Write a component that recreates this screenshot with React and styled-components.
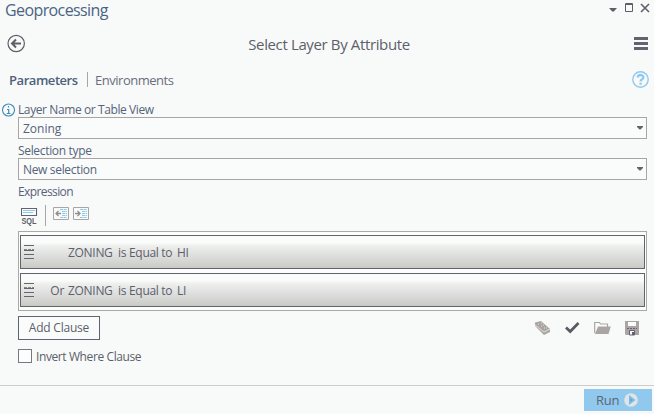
import React from 'react';
import styled, { createGlobalStyle } from 'styled-components';

const ink = '#5c5f6a';
const sky = '#8fc9ef';

const Global = createGlobalStyle`
  * { box-sizing: border-box; }
  body { margin: 0; background: #f8faf9; }
`;
const Pane = styled.main`
  width: 654px; height: 414px; overflow: hidden;
  display: flex; flex-direction: column;
  background: #f8faf9; color: ${ink};
  font: 12px/16px "Open Sans", "Noto Sans", sans-serif;
  white-space: nowrap;
  svg { display: block; flex: none; }
`;
const Text = styled.span`
  letter-spacing: ${p => p.$track || 0}px;
  padding-top: ${p => p.$drop || 0}px;
`;
const TitleBar = styled.header`
  height: 22px; padding: 0 4px 2px 5px;
  display: flex; justify-content: space-between; align-items: center;
`;
const Title = styled(Text)`font-size: 16px; line-height: 20px; color: #4a6484;`;
const WindowControls = styled.div`display: flex; height: 18px;`;
const Heading = styled.div`
  height: 43px; padding: 0 6px 0 7px;
  display: grid; grid-template-columns: 19px 1fr 14px; align-items: center; text-align: center;
`;
const ToolName = styled(Text)`font-size: 15px; line-height: 20px; padding-right: 2px;`;
const TabBar = styled.nav`
  height: 29px; padding: 0 5px 0 9px;
  display: flex; align-items: center; font-size: 13px; line-height: 18px;
`;
const Tab = styled(Text)`
  width: ${p => p.$width}px; font-weight: ${p => (p.$active ? 600 : 400)};
  color: ${p => (p.$active ? '#4d617b' : '#686e7c')};
`;
const Divider = styled.span`
  width: 1px; height: ${p => p.$height}px; margin: 0 ${p => p.$right}px 0 ${p => p.$left}px;
  background: #aaa5a3;
`;
const HelpSlot = styled.div`margin: 0 0 1px auto;`;
const Form = styled.section`
  padding: 8px 7px 0 18px; height: 283px;
  display: flex; flex-direction: column; align-items: stretch;
  color: #55637a;
`;
const Label = styled.label`
  height: ${p => p.$height || 19}px; padding-top: ${p => p.$top || 0}px;
  display: flex; gap: 3px; margin-left: ${p => (p.$info ? -16 : 0)}px;
`;
const InfoLabel = styled(Label)`
  align-items: flex-end; line-height: 15px;
`;
const Select = styled.div`
  height: 22px; padding: 0 3px 0 4px; border: 1px solid #aaa5a3; background: #fafcfc;
  display: flex; align-items: center; justify-content: space-between;
`;
const Toolbar = styled.div`
  height: 30px; padding: 4px 0 0 3px; display: flex; align-items: flex-start;
`;
const IconButton = styled.span`margin-top: ${p => p.$top || 0}px; margin-right: ${p => p.$right || 0}px;`;
const ClauseList = styled.div`
  height: 80px; padding: 3px 1px; border: 1px solid #aaa9a2; background: #fcfefd;
  display: flex; flex-direction: column; gap: 4px;
`;
const Clause = styled.div`
  height: 34px; padding-left: 3px; border: 1px solid #62636f; color: ${ink};
  background: linear-gradient(#fafbfb 0 20%, #eeefec 32%, #e0e1e1 55%, #d6d6d4 78%, #c9c9c4);
  display: grid; grid-template-columns: 10px 30px 1fr; align-items: center;
`;
const Joiner = styled(Text)`text-align: right;`;
const Condition = styled(Text)`padding-left: 4px; display: flex;`;
const Part = styled.span`width: ${p => p.$width}px;`;
const Actions = styled.div`
  height: 33px; padding: 5px 8px 4px 0;
  display: flex; align-items: center; justify-content: space-between;
`;
const AddButton = styled.button`
  width: 82px; height: 24px; padding: 0; border: 1px solid #62636f; background: #fafcfc;
  color: ${ink}; font: inherit;
`;
const FileActions = styled.div`display: flex; align-items: center; gap: 14px;`;
const CheckRow = styled.label`display: flex; align-items: center; gap: 4px; height: 16px; margin-top: 4px; color: ${ink};`;
const Box = styled.span`width: 14px; height: 14px; border: 1px solid #77787f; background: #fcfefd;`;
const Footer = styled.footer`
  margin-top: 8px; height: 29px; border-top: 1px solid #cdcdc9; padding: 3px 2px 0 0;
  display: flex; justify-content: flex-end;
`;
const RunButton = styled.button`
  width: 68px; height: 22px; padding: 0 14px 0 12px; border: 0; background: #91c9ee; color: #5b6573;
  font: inherit; font-size: 13px; display: flex; align-items: center; justify-content: space-between;
`;

const Caret = () => <svg width="6" height="4" viewBox="0 0 6 4"><path d="M0 0h6v1L3.5 3.5h-1L0 1z" fill="#62646f" /></svg>;

const WindowIcons = () => (
  <svg width="44" height="16" viewBox="0 0 44 16" fill="none">
    <path d="M3 7h8L7.8 10.5H6.2z" fill={ink} />
    <path d="M19.5 2.5h7v8h-7zM19 3.5h8" stroke={ink} />
    <path d="M35 3l8 8M43 3l-8 8" stroke={ink} strokeWidth="1.6" />
  </svg>
);
const BackIcon = () => (
  <svg width="19" height="19" viewBox="0 0 19 19" fill="none" stroke="#5e5e68">
    <circle cx="9.2" cy="9.5" r="8.2" strokeWidth="1.2" />
    <path d="M14 9.5H5.5M9 5.5l-4 4 4 4" strokeWidth="2" />
  </svg>
);
const MenuIcon = () => (
  <svg width="14" height="13" viewBox="0 0 14 13"><path d="M0 0h14v3H0zM0 5h14v3H0zM0 10h14v3H0z" fill="#62636f" /></svg>
);
const HelpIcon = () => (
  <svg width="17" height="17" viewBox="0 0 17 17" fill="none" stroke={sky}>
    <circle cx="8.5" cy="8.5" r="7.7" strokeWidth="1.4" />
    <path d="M5.8 6.4c0-3.2 5.6-3.2 5.6 0 0 2-2.8 1.8-2.8 4M8.6 11.7v2" strokeWidth="2.3" />
  </svg>
);
const InfoIcon = () => (
  <svg width="13" height="14" viewBox="0 0 13 14" fill="none" stroke="#438ab8">
    <circle cx="6.5" cy="7" r="6" strokeWidth="1.1" />
    <path d="M6.5 3v1.6M5 6.5h1.7v4M4.7 10.5h3.8" strokeWidth="1.2" />
  </svg>
);
const SqlIcon = () => (
  <svg width="17" height="23" viewBox="0 0 17 23">
    <path d="M.5 1.5h15v7H.5z" fill="#fafcfc" stroke="#62636f" strokeWidth="1.1" />
    <path d="M2 3.5h12M2 5.5h10" stroke={sky} />
    <text x=".5" y="16.5" textLength="15" lengthAdjust="spacingAndGlyphs" fill={ink} fontFamily="Liberation Sans, sans-serif" fontWeight="700" fontSize="8.5">SQL</text>
  </svg>
);
const IndentIcon = ({ right }) => (
  <svg width="16" height="13" viewBox="0 0 16 13" fill="none">
    <path d="M.5.5h15v12H.5z" stroke="#aaa5a3" />
    <path d="M7 2.5h7M9 4.5h5M9 6.5h5M9 8.5h5M7 10.5h7" stroke={sky} strokeDasharray="3 .6" />
    <path d={right ? 'M2 6.5h5M4.5 4 7 6.5 4.5 9' : 'M8 6.5H3M5.5 4 3 6.5 5.5 9'} stroke="#918d8c" strokeWidth="1.3" />
  </svg>
);
const GripIcon = () => (
  <svg width="10" height="14" viewBox="0 0 10 14" fill="none" stroke="#65656b">
    <path d="M0 .5h10M0 5.5h10M0 9.5h10M0 13.5h10" strokeWidth="1.2" />
    <path d="M0 4.5h3M4 4.5h3M8 4.5h2" stroke="#85858a" />
  </svg>
);
const EraserIcon = () => (
  <svg width="17" height="16" viewBox="0 0 17 16">
    <path d="M1 2.5 7 1l9 8v3l-6 3-9-9z" fill="#aaa5a3" />
    <path d="M1 5l9 7 6-3" stroke="#e1dfdc" fill="none" />
    <path d="M4 4h1M7 3h1M7 6h1M9 5h1M10 8h1M12 8h1" stroke="#e1dfdc" />
  </svg>
);
const CheckIcon = () => (
  <svg width="15" height="16" viewBox="0 0 15 16"><path d="M1 7.5l4.2 4L13.5 3" stroke="#595963" strokeWidth="2.7" fill="none" /></svg>
);
const FolderIcon = () => (
  <svg width="17" height="16" viewBox="0 0 17 16">
    <path d="M.7 13V2.5h4.8l1 1.5h7V7" stroke="#aaa5a3" strokeWidth="1.2" fill="#fafcfc" />
    <path d="M1 14 4 6.5h12.8L14.5 14z" fill="#aaa5a3" />
  </svg>
);
const SaveIcon = () => (
  <svg width="14" height="16" viewBox="0 0 14 16">
    <path d="M0 1h14v14H1l-1-1z" fill="#aaa5a3" />
    <path d="M3 2h8v4H3z" fill="#fafcfc" />
    <path d="M2 8.5h10" stroke="#62636f" strokeDasharray="2 1" />
    <path d="M4.5 10.5h5V15h-5z" fill="#fafcfc" stroke="#62636f" />
    <path d="M7 12h2v3H7z" fill="#62636f" />
  </svg>
);
const PlayIcon = () => (
  <svg width="14" height="14" viewBox="0 0 14 14">
    <circle cx="7" cy="7" r="6.8" fill="#dfe5e7" />
    <path d="M5 2 11.5 7 5 12z" fill="#79bce8" /><path d="M6.5 6.5h1v1h-1z" fill={ink} />
  </svg>
);

const clauses = [
  { joiner: '', value: 'HI' },
  { joiner: 'Or', value: 'LI' },
];

export default function App() {
  return (
    <Pane>
      <Global />
      <TitleBar>
        <Title $track={-0.6}>Geoprocessing</Title>
        <WindowControls><WindowIcons /></WindowControls>
      </TitleBar>
      <Heading>
        <BackIcon /><ToolName $track={-0.37}>Select Layer By Attribute</ToolName><MenuIcon />
      </Heading>
      <TabBar>
        <Tab $active $width={69} $track={-0.45}>Parameters</Tab>
        <Divider $height={15} $left={9} $right={7} />
        <Tab $width={80} $track={-0.48}>Environments</Tab>
        <HelpSlot><HelpIcon /></HelpSlot>
      </TabBar>
      <Form>
        <InfoLabel $info $height={15}><InfoIcon /><Text $track={-0.4}>Layer Name or Table View</Text></InfoLabel>
        <Select><Text $drop={2}>Zoning</Text><Caret /></Select>
        <Label $top={4}><Text $track={-0.33}>Selection type</Text></Label>
        <Select><Text $drop={2} $track={-0.33}>New selection</Text><Caret /></Select>
        <Label $height={21} $top={4}><Text $track={-0.6}>Expression</Text></Label>
        <Toolbar>
          <IconButton $top={2}><SqlIcon /></IconButton>
          <Divider $height={21} $left={7} $right={7} />
          <IconButton $top={2} $right={4}><IndentIcon /></IconButton>
          <IconButton $top={2}><IndentIcon right /></IconButton>
        </Toolbar>
        <ClauseList>
          {clauses.map(({ joiner, value }) => (
            <Clause key={value}>
              <GripIcon />
              <Joiner $drop={2} $track={-0.3}>{joiner}</Joiner>
              <Condition $drop={2} $track={-0.3}>
                <Part $width={50}>ZONING</Part><Part $width={59}>is Equal to</Part><span>{value}</span>
              </Condition>
            </Clause>
          ))}
        </ClauseList>
        <Actions>
          <AddButton><Text $track={-0.22}>Add Clause</Text></AddButton>
          <FileActions><EraserIcon /><CheckIcon /><FolderIcon /><SaveIcon /></FileActions>
        </Actions>
        <CheckRow><Box /><Text $drop={2} $track={-0.4}>Invert Where Clause</Text></CheckRow>
      </Form>
      <Footer><RunButton><Text $track={-0.2}>Run</Text><PlayIcon /></RunButton></Footer>
    </Pane>
  );
}
